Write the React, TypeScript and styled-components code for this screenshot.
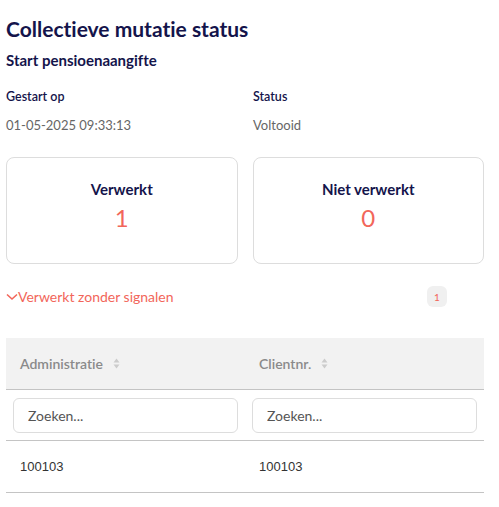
import * as React from 'react';
import styled, { createGlobalStyle } from 'styled-components';

const GlobalStyle = createGlobalStyle`
  body {
    margin: 0;
    background: #ffffff;
    font-family: 'Lato', 'Noto Sans', sans-serif;
    font-variant-ligatures: none;
  }
`;

const navy = '#14144b';
const salmon = '#f2665a';

const Page = styled.div`
  width: 478px;
  padding: 15px 0 0 6px;
`;

const Title = styled.h1`
  margin: 0;
  font-size: 21px;
  line-height: 28px;
  font-weight: 700;
  color: ${navy};
`;

const SubTitle = styled.h2`
  margin: 7px 0 0;
  font-size: 15px;
  line-height: 20px;
  font-weight: 700;
  color: ${navy};
`;

const InfoGrid = styled.div`
  display: grid;
  grid-template-columns: 247px 1fr;
  row-gap: 10px;
  margin-top: 18px;
`;

const InfoLabel = styled.div`
  font-size: 12.5px;
  line-height: 18px;
  font-weight: 600;
  color: ${navy};
`;

const InfoValue = styled.div`
  font-size: 13px;
  line-height: 18px;
  color: #666666;
`;

const Cards = styled.div`
  display: grid;
  grid-template-columns: 1fr 1fr;
  gap: 15px;
  margin-top: 23px;
`;

const Card = styled.div`
  height: 107px;
  border: 1px solid #dddddd;
  border-radius: 8px;
  box-sizing: border-box;
  display: flex;
  flex-direction: column;
  align-items: center;
  padding-top: 21px;
`;

const CardLabel = styled.div`
  font-size: 15px;
  line-height: 20px;
  font-weight: 700;
  color: ${navy};
`;

const CardNumber = styled.div`
  margin-top: 4px;
  font-size: 24px;
  line-height: 30px;
  color: ${salmon};
`;

const Collapse = styled.div`
  display: flex;
  align-items: center;
  justify-content: space-between;
  margin-top: 22px;
  padding-right: 37px;
`;

const CollapseTitle = styled.div`
  display: flex;
  align-items: center;
  font-size: 14px;
  color: ${salmon};
`;

const Badge = styled.span`
  display: inline-flex;
  align-items: center;
  justify-content: center;
  width: 20px;
  height: 21px;
  border-radius: 6px;
  background: #f0f0f0;
  color: ${salmon};
  font-size: 10px;
`;

const Table = styled.table`
  width: 100%;
  margin-top: 31px;
  border-collapse: collapse;
  table-layout: fixed;
`;

const HeadCell = styled.th`
  height: 51px;
  padding: 0 0 0 14px;
  background: #f2f2f2;
  border-bottom: 1px solid #c4c4c4;
  text-align: left;
  font-size: 14px;
  font-weight: 600;
  color: #8a8a8a;
`;

const HeadInner = styled.span`
  display: inline-flex;
  align-items: center;
  gap: 10px;
`;

const FilterCell = styled.td`
  height: 50px;
  padding: 0 7px;
  border-bottom: 1px solid #c4c4c4;
`;

const SearchInput = styled.input`
  width: 100%;
  height: 35px;
  box-sizing: border-box;
  border: 1px solid #dddddd;
  border-radius: 6px;
  padding: 0 14px;
  font-family: inherit;
  font-size: 14px;
  color: #555555;
  &::placeholder {
    color: #555555;
  }
`;

const DataCell = styled.td`
  height: 51px;
  padding: 0 0 0 14px;
  border-bottom: 1px solid #c4c4c4;
  font-family: 'Liberation Sans', Arial, sans-serif;
  font-size: 13px;
  color: #333333;
`;

const SortIcon = () => (
  <svg width="7" height="11" viewBox="0 0 7 11">
    <path d="M3.5 0.5 L6.5 4.5 H0.5 Z" fill="#cccccc" />
    <path d="M3.5 10.5 L6.5 6.5 H0.5 Z" fill="#cccccc" />
  </svg>
);

const Chevron = () => (
  <svg width="12" height="8" viewBox="0 0 12 8">
    <path d="M1 1.5 L6 6 L11 1.5" fill="none" stroke={salmon} strokeWidth="1.6" />
  </svg>
);

export default function App() {
  return (
    <Page>
      <GlobalStyle />
      <Title>Collectieve mutatie status</Title>
      <SubTitle>Start pensioenaangifte</SubTitle>
      <InfoGrid>
        <InfoLabel>Gestart op</InfoLabel>
        <InfoLabel>Status</InfoLabel>
        <InfoValue>01-05-2025 09:33:13</InfoValue>
        <InfoValue>Voltooid</InfoValue>
      </InfoGrid>
      <Cards>
        <Card>
          <CardLabel>Verwerkt</CardLabel>
          <CardNumber>1</CardNumber>
        </Card>
        <Card>
          <CardLabel>Niet verwerkt</CardLabel>
          <CardNumber>0</CardNumber>
        </Card>
      </Cards>
      <Collapse>
        <CollapseTitle>
          <Chevron />
          Verwerkt zonder signalen
        </CollapseTitle>
        <Badge>1</Badge>
      </Collapse>
      <Table>
        <thead>
          <tr>
            <HeadCell>
              <HeadInner>Administratie <SortIcon /></HeadInner>
            </HeadCell>
            <HeadCell>
              <HeadInner>Clientnr. <SortIcon /></HeadInner>
            </HeadCell>
          </tr>
          <tr>
            <FilterCell>
              <SearchInput placeholder="Zoeken..." />
            </FilterCell>
            <FilterCell>
              <SearchInput placeholder="Zoeken..." />
            </FilterCell>
          </tr>
        </thead>
        <tbody>
          <tr>
            <DataCell>100103</DataCell>
            <DataCell>100103</DataCell>
          </tr>
        </tbody>
      </Table>
    </Page>
  );
}
